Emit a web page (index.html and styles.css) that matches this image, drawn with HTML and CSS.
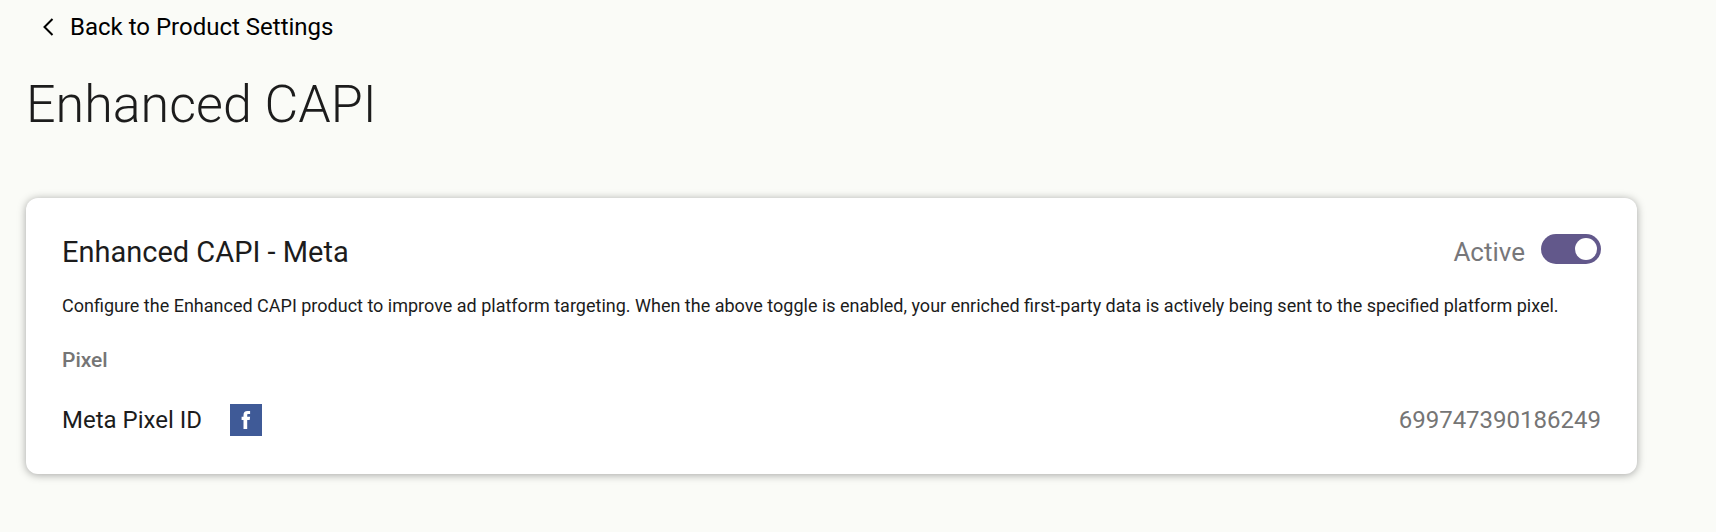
FILE: index.html
```html
<!DOCTYPE html>
<html lang="en">
<head>
    <meta charset="UTF-8">
    <meta name="viewport" content="width=device-width, initial-scale=1.0">
    <title>Enhanced CAPI</title>
    <link rel="stylesheet" href="styles.css">
</head>
<body>
    <main class="container">
        <a class="back-link" href="#">
            <svg class="back-icon" viewBox="0 0 12 18" aria-hidden="true">
                <path d="M10.5 1 L2.5 9 L10.5 17"/>
            </svg>
            Back to Product Settings
        </a>

        <h1 class="page-title">Enhanced CAPI</h1>

        <section class="card">
            <div class="card-header">
                <h2 class="card-title">Enhanced CAPI - Meta</h2>
                <label class="toggle-label">
                    Active
                    <input type="checkbox" class="toggle" role="switch" checked>
                </label>
            </div>

            <p class="description">Configure the Enhanced CAPI product to improve ad platform targeting. When the above toggle is enabled, your enriched first-party data is actively being sent to the specified platform pixel.</p>

            <h3 class="section-title">Pixel</h3>

            <div class="pixel-row">
                <span class="pixel-name">Meta Pixel ID</span>
                <svg class="pixel-logo" viewBox="0 0 32 32" aria-hidden="true">
                    <rect width="32" height="32" fill="#3f5a97"/>
                    <path fill="#fff" d="M13.5 25v-9H11.6v-3.2h1.9v-1.6c0-2.9 1.3-4.2 4-4.2h2.6v3.1h-1.6c-1.1 0-1.3.5-1.3 1.4v1.3h2.9l-.4 3.2h-2.5v9z"/>
                </svg>
                <span class="pixel-id">699747390186249</span>
            </div>
        </section>
    </main>
</body>
</html>
```

FILE: styles.css
```css
body {
    margin: 0;
    font-family: Roboto, Arial, sans-serif;
    background-color: #fafbf7;
    color: #1c1c1c;
}
.container {
    padding: 12px 79px 40px 26px;
}
.back-link {
    display: inline-flex;
    align-items: center;
    gap: 16px;
    padding-left: 16px;
    font-size: 24px;
    line-height: 30px;
    color: #000;
    text-decoration: none;
}
.back-icon {
    width: 12px;
    height: 18px;
    fill: none;
    stroke: #000;
    stroke-width: 2;
}
.page-title {
    margin: 30px 0 60px;
    font-size: 52px;
    line-height: 66px;
    font-weight: 300;
}
.card {
    padding: 36px 36px 38px;
    background: #fff;
    border-radius: 12px;
    box-shadow: 0 1px 8px rgba(0, 0, 0, 0.35);
}
.card-header {
    display: flex;
    align-items: flex-start;
    justify-content: space-between;
}
.card-title {
    margin: 0;
    font-size: 29px;
    line-height: 36px;
    font-weight: 400;
}
.toggle-label {
    display: flex;
    align-items: flex-start;
    gap: 16px;
    font-size: 26px;
    line-height: 36px;
    color: #77777a;
}
.toggle {
    appearance: none;
    display: flex;
    align-items: center;
    justify-content: flex-end;
    box-sizing: border-box;
    width: 60px;
    height: 30px;
    margin: 0;
    padding: 0 4px;
    border-radius: 15px;
    background-color: #62588b;
    cursor: pointer;
}
.toggle::before {
    content: "";
    width: 22px;
    height: 22px;
    border-radius: 50%;
    background: #fff;
}
.toggle:not(:checked) {
    justify-content: flex-start;
    background-color: #aaa;
}
.description {
    margin: 24px 0 30px;
    font-size: 18px;
    line-height: 24px;
}
.section-title {
    margin: 0 0 32px;
    font-size: 21px;
    line-height: 24px;
    font-weight: 500;
    color: #757575;
}
.pixel-row {
    display: flex;
    align-items: center;
    font-size: 24px;
    line-height: 32px;
}
.pixel-logo {
    width: 32px;
    height: 32px;
    margin-left: 28px;
}
.pixel-id {
    margin-left: auto;
    color: #757575;
}
```
